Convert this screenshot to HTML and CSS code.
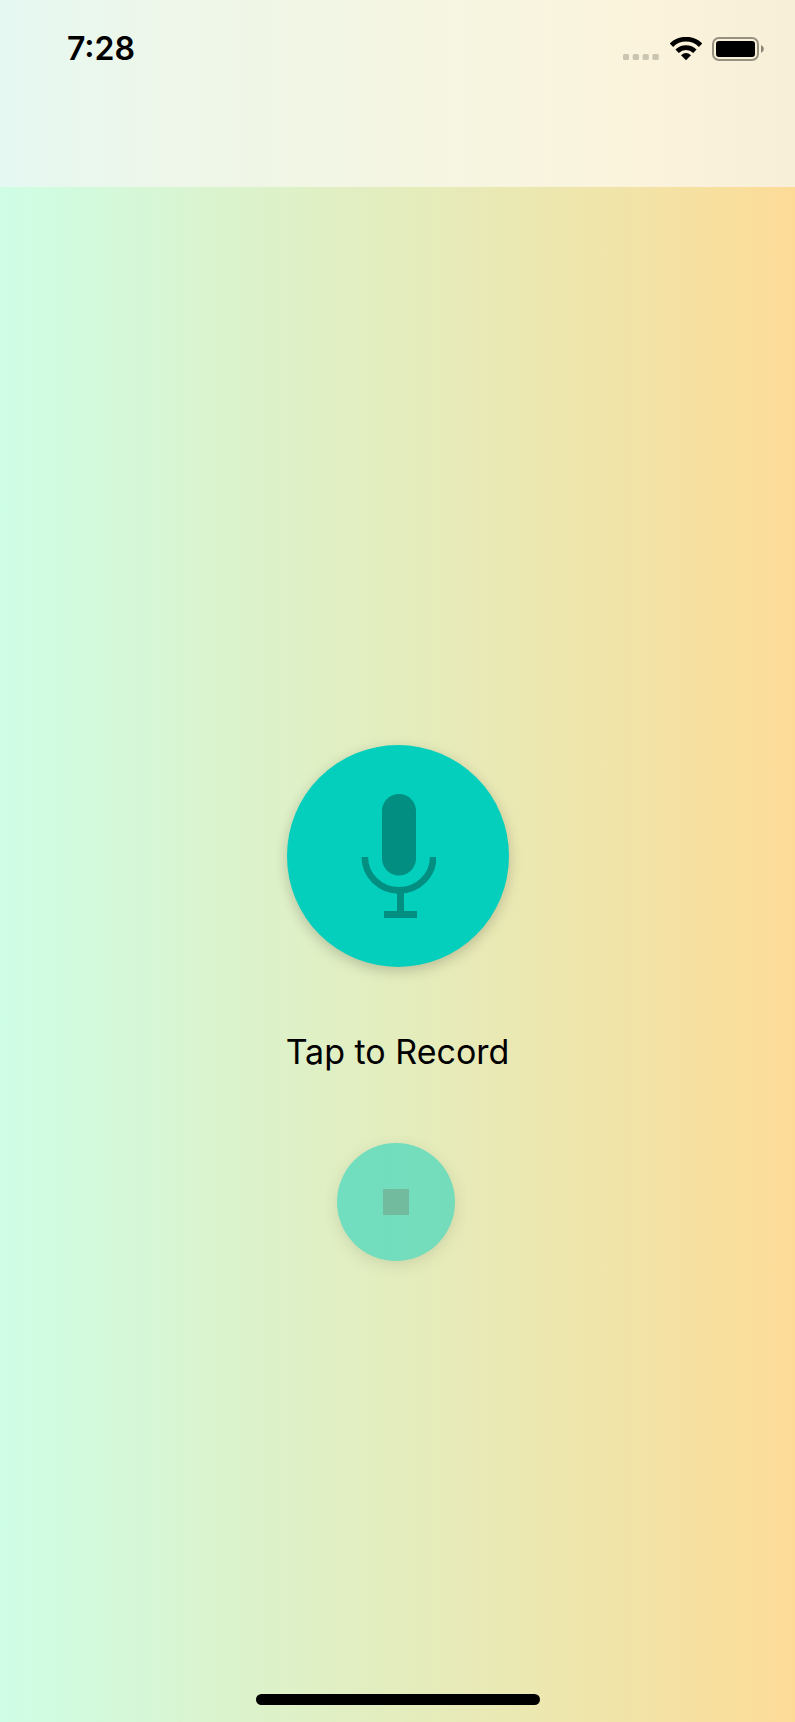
FILE: index.html
```html
<!DOCTYPE html>
<html lang="en">
<head>
<meta charset="utf-8">
<meta name="viewport" content="width=device-width, initial-scale=1">
<title>Record</title>
<link rel="stylesheet" href="styles.css">
</head>
<body>
<div class="screen">
  <header class="top-bar">
    <div class="status">
      <time class="clock">7:28</time>
      <div class="indicators">
        <svg class="signal" width="36" height="6" viewBox="0 0 36 6" aria-hidden="true">
          <rect width="6" height="6" rx="1.5"/><rect x="9.7" width="6.3" height="6" rx="1.5"/><rect x="19.6" width="6.2" height="6" rx="1.5"/><rect x="29.4" width="6.4" height="6" rx="1.5"/>
        </svg>
        <svg class="wifi" width="32" height="24" viewBox="0 0 32 24" aria-hidden="true">
          <path d="M1.4 8.2A20.8 20.8 0 0 1 30.6 8.2" fill="none" stroke="#000" stroke-width="4.8"/>
          <path d="M7.1 14.3A12.5 12.5 0 0 1 24.9 14.3" fill="none" stroke="#000" stroke-width="4.8"/>
          <path d="M11 18.3Q16 13.6 21 18.3L16 23.3Z"/>
        </svg>
        <svg class="battery" width="52" height="24" viewBox="0 0 52 24" aria-hidden="true">
          <rect x="1" y="1" width="45" height="22" rx="6" fill="none" stroke="#979180" stroke-width="2"/>
          <rect x="4" y="4" width="39" height="16" rx="3"/>
          <path d="M49 8Q51.8 9.4 51.8 12T49 16Z" fill="#8b8576"/>
        </svg>
      </div>
    </div>
  </header>
  <main class="recorder">
    <button class="round record" type="button" aria-labelledby="record-label">
      <svg width="76" height="124" viewBox="0 0 76 124" aria-hidden="true">
        <rect x="22" y="0" width="34" height="81.500" rx="17" fill="#028e80"/>
        <path d="M4.800 63A34.200 33.400 0 0 0 73.200 63" fill="none" stroke="#028e80" stroke-width="6.600"/>
        <path d="M37 98H44V117H57V124H24V117H37Z" fill="#028e80"/>
      </svg>
    </button>
    <p class="caption" id="record-label">Tap to Record</p>
    <button class="round stop" type="button" aria-label="Stop" disabled>
      <svg width="26" height="26" viewBox="0 0 26 26" aria-hidden="true"><rect width="26" height="26" fill="#038b81"/></svg>
    </button>
  </main>
  <footer class="home"><div class="home-bar"></div></footer>
</div>
</body>
</html>
```
FILE: styles.css
```css
* {
  box-sizing: border-box;
}

body {
  margin: 0;
  font-family: Inter, "Liberation Sans", sans-serif;
  color: #000;
}

.screen {
  display: flex;
  flex-direction: column;
  min-height: 100vh;
  background: linear-gradient(90deg, #cefde5 0%, #d1fbdf 8%, #daf4cf 26%, #e6ebb9 56%, #f1e4a8 78%, #fddb97 100%);
}

.top-bar {
  padding: 31px 31px 121px 67px;
  background: linear-gradient(90deg, #e5f8f2 0%, #ecf7eb 16%, #f0f6e6 33%, #f6f5e0 60%, #fbf3dc 80%, #f8efd9 100%);
}

.status {
  display: flex;
  align-items: center;
  justify-content: space-between;
  height: 35px;
}

.clock {
  font-size: 32px;
  line-height: 35px;
  font-weight: 600;
}

.indicators {
  display: flex;
  align-items: flex-end;
  height: 24px;
}

.signal {
  margin: 0 11px 1px 0;
  fill: #c9c5b1;
}

.wifi {
  margin-right: 10px;
}

.recorder {
  flex: 1;
  display: flex;
  flex-direction: column;
  align-items: center;
  justify-content: center;
  padding-top: 125px;
}

.round {
  display: flex;
  align-items: center;
  justify-content: center;
  padding: 0;
  border: 0;
  border-radius: 50%;
  background: #04cfbd;
}

.record {
  width: 222px;
  height: 222px;
  box-shadow: 0 4px 14px rgba(0, 0, 0, 0.2);
  cursor: pointer;
}

.caption {
  margin: 63px 0 69px;
  font-size: 34px;
  line-height: 44px;
}

.stop {
  width: 118px;
  height: 118px;
  margin-right: 3px;
  box-shadow: 0 4px 14px rgba(0, 0, 0, 0.2);
  opacity: 0.5;
}

.home {
  display: flex;
  justify-content: center;
  padding-bottom: 17px;
}

.home-bar {
  width: 284px;
  max-width: 60%;
  height: 11px;
  border-radius: 6px;
  background: #000;
}
```
